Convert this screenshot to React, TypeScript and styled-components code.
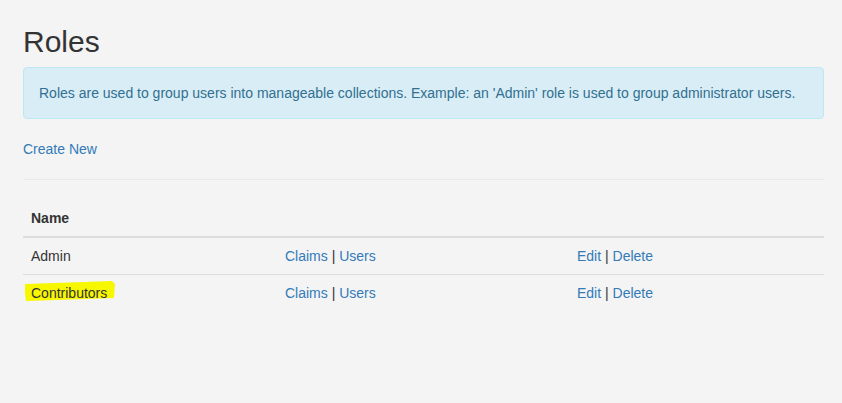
import React from "react";
import styled, { createGlobalStyle } from "styled-components";

const GlobalStyle = createGlobalStyle`
  html, body {
    margin: 0;
    padding: 0;
    background: #f4f4f4;
  }
  body {
    font-family: "Liberation Sans", Arial, Helvetica, sans-serif;
    font-size: 14px;
    line-height: 20px;
    color: #333333;
  }
  * { box-sizing: border-box; }
`;

const Container = styled.div`
  padding: 0 18px 40px 23px;
`;

const Title = styled.h2`
  margin: 25px 0 9px;
  font-size: 30px;
  line-height: 33px;
  font-weight: 500;
  color: #333333;
`;

const Alert = styled.div`
  padding: 15px;
  margin-bottom: 20px;
  border: 1px solid #bce8f1;
  border-radius: 4px;
  background: #d9edf7;
  color: #31708f;
`;

const Paragraph = styled.p`
  margin: 0 0 10px;
`;

const Link = styled.a`
  color: #337ab7;
  text-decoration: none;
  cursor: pointer;
`;

const Rule = styled.hr`
  margin: 20px 0;
  border: 0;
  border-top: 1px solid #eaeaea;
  height: 0;
`;

const Table = styled.table`
  width: 100%;
  border-collapse: collapse;
  border-spacing: 0;
  table-layout: fixed;
`;

const Col = styled.col<{ $width?: number }>`
  width: ${(p) => (p.$width ? `${p.$width}px` : "auto")};
`;

const HeadCell = styled.th`
  padding: 8px;
  text-align: left;
  font-weight: 700;
  border-bottom: 2px solid #dddddd;
  vertical-align: bottom;
`;

const Cell = styled.td<{ $first?: boolean }>`
  padding: 8px;
  vertical-align: top;
  border-top: ${(p) => (p.$first ? "0" : "1px solid #dddddd")};
`;

const Separator = styled.span`
  color: #333333;
`;

const Highlighted = styled.span`
  position: relative;
  display: inline-block;
`;

const Marker = styled.svg`
  position: absolute;
  left: -6px;
  top: -2px;
  width: 91px;
  height: 21px;
  z-index: 0;
  overflow: visible;
`;

const MarkedText = styled.span`
  position: relative;
  z-index: 1;
`;

type Role = { name: string; highlight?: boolean };

const roles: Role[] = [
  { name: "Admin" },
  { name: "Contributors", highlight: true },
];

const ActionLinks: React.FC<{ items: string[] }> = ({ items }) => (
  <>
    {items.map((label, i) => (
      <React.Fragment key={label}>
        {i > 0 && <Separator> | </Separator>}
        <Link>{label}</Link>
      </React.Fragment>
    ))}
  </>
);

export default function App() {
  return (
    <>
      <GlobalStyle />
      <Container>
        <Title>Roles</Title>
        <Alert>
          Roles are used to group users into manageable collections. Example:
          an 'Admin' role is used to group administrator users.
        </Alert>
        <Paragraph>
          <Link>Create New</Link>
        </Paragraph>
        <Rule />
        <Table>
          <colgroup>
            <Col $width={254} />
            <Col $width={292} />
            <Col />
          </colgroup>
          <thead>
            <tr>
              <HeadCell>Name</HeadCell>
              <HeadCell></HeadCell>
              <HeadCell></HeadCell>
            </tr>
          </thead>
          <tbody>
            {roles.map((role, i) => (
              <tr key={role.name}>
                <Cell $first={i === 0}>
                  {role.highlight ? (
                    <Highlighted>
                      <Marker viewBox="0 0 91 21" aria-hidden="true">
                        <polygon
                          points="0,3 45,1.5 87,0 90,3 89,17 45,18.5 1,20 0,12"
                          fill="#f7f700"
                        />
                      </Marker>
                      <MarkedText>{role.name}</MarkedText>
                    </Highlighted>
                  ) : (
                    role.name
                  )}
                </Cell>
                <Cell $first={i === 0}>
                  <ActionLinks items={["Claims", "Users"]} />
                </Cell>
                <Cell $first={i === 0}>
                  <ActionLinks items={["Edit", "Delete"]} />
                </Cell>
              </tr>
            ))}
          </tbody>
        </Table>
      </Container>
    </>
  );
}
